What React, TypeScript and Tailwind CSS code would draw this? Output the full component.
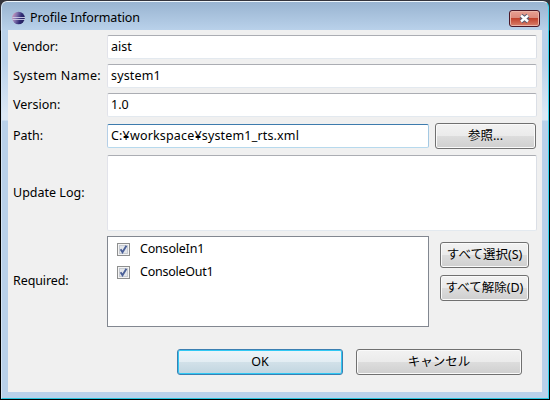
import React from "react";

const face = "font-['Noto_Sans','Noto_Sans_CJK_JP',sans-serif]";

function Label({ children, className }: { children: React.ReactNode; className: string }) {
  return <div className={`flex w-[99px] shrink-0 items-center pl-[5px] whitespace-nowrap ${className}`}>{children}</div>;
}

function Field({ value, className }: { value?: string; className: string }) {
  return (
    <div className={`flex items-center rounded-[2px] border border-t-[#abadb3] border-r-[#dbdfe6] border-b-[#e3e9ef] border-l-[#e2e3ea] bg-white pl-[3px] ${className}`}>
      {value && <span>{value}</span>}
    </div>
  );
}

function Button({ children, className }: { children: React.ReactNode; className: string }) {
  return (
    <button className={`flex h-[26px] shrink-0 items-center justify-center rounded-[3px] border border-[#707070] bg-[linear-gradient(#f2f2f2,#ebebeb_48%,#dddddd_49%,#cfcfcf)] shadow-[inset_0_0_0_1px_#fafafa] ${className}`}>
      {children}
    </button>
  );
}

function Check({ label, className }: { label: string; className: string }) {
  return (
    <div className="flex h-[23px] items-center">
      <svg className="mr-[10px] shrink-0" width="13" height="13" viewBox="0 0 13 13">
        <rect x=".5" y=".5" width="12" height="12" fill="#f4f4f4" stroke="#8e8f8f" />
        <rect x="2.5" y="2.5" width="8" height="8" fill="#e3e6ea" stroke="#c6cad1" />
        <path d="M3.6 6.2 5.5 9.2 9.4 2.8" fill="none" stroke="#4a5f97" strokeWidth="1.9" />
      </svg>
      <span className={className}>{label}</span>
    </div>
  );
}

function EclipseIcon() {
  return (
    <svg className="shrink-0" width="16" height="16" viewBox="0 0 16 16">
      <defs>
        <linearGradient id="globe" x1="0" y1="0" x2="1" y2=".3">
          <stop offset="0" stopColor="#e3a3bd" />
          <stop offset=".4" stopColor="#8272ae" />
          <stop offset=".75" stopColor="#302b75" />
          <stop offset="1" stopColor="#25215f" />
        </linearGradient>
      </defs>
      <circle cx="7.5" cy="8" r="6.3" fill="url(#globe)" />
      <path d="M1.5 7.5h12.5M1.5 9.5h12.5" stroke="#cfcfe8" strokeWidth=".9" />
    </svg>
  );
}

export default function App() {
  return (
    <div className={`h-[400px] w-[550px] overflow-hidden bg-[linear-gradient(#34343c_30px,#000_31px)] text-[12.5px] leading-none text-black ${face}`}>
      <div className="flex h-[399px] flex-col pt-px pr-px pl-px">
        <div className="flex h-[398px] flex-col rounded-t-[6px] border border-t-[#eef5fb] border-r-[#35d5ee] border-b-[#27c3dc] border-l-[#d5e5f5] bg-[linear-gradient(#99b4d1,#b9d1ea_28px,#b9d1ea_60px,#dce8f5_112px,#dce8f5_118px,#b9d1ea_119px)] pr-[6px] pb-[6px] pl-[6px]">
          <header className="flex h-[28px] shrink-0 items-start">
            <div className="flex h-[32px] items-center pl-[3px]">
              <EclipseIcon />
              <h1 className="ml-[3px] text-[12.5px] font-normal tracking-[-0.1px]">Profile Information</h1>
            </div>
            <div className="mt-[8px] mr-[2px] ml-auto flex h-[17px] w-[31px] items-center justify-center rounded-[3px] border border-[#4b1727] bg-[linear-gradient(#e8a093,#dc8a7c_45%,#c0402b_48%,#d9806c)] shadow-[inset_0_0_0_1px_#eab4a8]">
              <svg width="13" height="11" viewBox="0 0 13 11">
                <path d="m3 2.5 7 6m0-6-7 6" stroke="#575a72" strokeWidth="4.4" />
                <path d="m3 2.5 7 6m0-6-7 6" stroke="#fff" strokeWidth="2.4" />
              </svg>
            </div>
          </header>

          <main className="flex h-[362px] shrink-0 flex-col bg-[#f0f0f0] pt-[5px]">
            <div className="flex h-[29px]">
              <Label className="h-[24px] tracking-[-0.1px]">Vendor:</Label>
              <Field value="aist" className="h-[24px] w-[430px]" />
            </div>
            <div className="flex h-[29px]">
              <Label className="h-[24px] tracking-[0.3px]">System Name:</Label>
              <Field value="system1" className="h-[24px] w-[430px] tracking-[0.15px]" />
            </div>
            <div className="flex h-[30px]">
              <Label className="h-[24px]">Version:</Label>
              <Field value="1.0" className="h-[24px] w-[430px]" />
            </div>
            <div className="flex h-[32px] items-start">
              <Label className="mt-px h-[24px]">Path:</Label>
              <div className="mt-px flex h-[24px] w-[322px] items-center rounded-[2px] border border-t-[#3d7bad] border-r-[#a4c9e3] border-b-[#b7d9ed] border-l-[#b5cfe7] bg-white pl-[3px] tracking-[0.17px]">C:¥workspace¥system1_rts.xml</div>
              <Button className="ml-[6px] w-[101px]">参照...</Button>
            </div>
            <div className="flex h-[81px]">
              <Label className="h-[76px]">Update Log:</Label>
              <Field className="h-[76px] w-[430px]" />
            </div>
            <div className="flex h-[91px]">
              <Label className="h-[91px] tracking-[-0.1px]">Required:</Label>
              <div className="w-[322px] border border-[#828790] bg-white pt-px pl-[9px]">
                <Check label="ConsoleIn1" className="tracking-[-0.2px]" />
                <Check label="ConsoleOut1" className="tracking-[-0.25px]" />
              </div>
              <div className="flex flex-col gap-[7px] pt-[6px] pl-[11px]">
                <Button className="w-[89px]">すべて選択(S)</Button>
                <Button className="w-[89px]">すべて解除(D)</Button>
              </div>
            </div>
            <div className="mt-[22px] flex gap-[13px] pl-[169px]">
              <button className="flex h-[26px] w-[166px] items-center justify-center rounded-[3px] border border-[#3c7fb1] bg-[linear-gradient(#edf4f9,#e3edf3_48%,#d2e1e9_49%,#c1d5e0)] shadow-[inset_0_0_0_1px_#30c8f4]">OK</button>
              <Button className="w-[166px]">キャンセル</Button>
            </div>
          </main>
        </div>
      </div>
    </div>
  );
}
